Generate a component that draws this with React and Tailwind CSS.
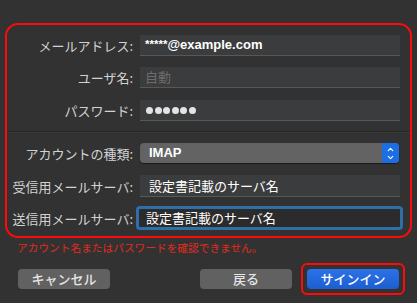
import { ChevronUp, ChevronDown } from 'lucide-react'

const jp = { fontFamily: '"Noto Sans CJK JP", "Noto Sans", sans-serif' }

const Label = ({ children }) => (
  <div className="w-[127px] shrink-0 text-right text-[13px] leading-none text-[#d2d2d2] pr-[1px]" style={jp}>
    {children}
  </div>
)

const Field = ({ children, className = '' }) => (
  <div className={`w-[260px] h-[21px] flex items-center pl-[5px] bg-[#3b3c3d] border-b border-[#575859] ${className}`}>
    {children}
  </div>
)

const Row = ({ label, children, className = '' }) => (
  <div className={`flex items-center gap-[6px] ${className}`}>
    <Label>{label}</Label>
    {children}
  </div>
)

export default function App() {
  return (
    <div className="w-[417px] h-[303px] bg-[#323232] pt-[23px] px-[5px] overflow-hidden">
      {/* 入力欄 */}
      <div className="w-[407px] h-[215px] border-2 border-[#ff0a0a] rounded-[13px] pt-[10px]">
        <Row label="メールアドレス:">
          <Field>
            <span className="text-[13px] font-semibold text-white" style={{ fontFamily: '"Liberation Sans", Arial, sans-serif' }}>
              <span className="text-[11.5px] align-[1px]">*****</span>@example.com
            </span>
          </Field>
        </Row>
        <Row label="ユーザ名:" className="mt-[11px]">
          <Field>
            <span className="text-[13px] text-[#6c6c6c]" style={jp}>自動</span>
          </Field>
        </Row>
        <Row label="パスワード:" className="mt-[12px]">
          <Field>
            <div className="flex gap-[1.5px] pl-[1px]">
              {[0, 1, 2, 3, 4, 5].map((i) => (
                <span key={i} className="w-[7px] h-[7px] rounded-full bg-[#e4e4e4]" />
              ))}
            </div>
          </Field>
        </Row>

        <div className="mt-[10px] border-t border-[#262626] border-b-[1px] border-b-[#3a3a3a]" />

        <Row label="アカウントの種類:" className="mt-[10px]">
          <div className="w-[259px] h-[20px] flex items-center rounded-[4px] bg-[#636363] shadow-[0_1px_1px_rgba(0,0,0,0.5)]">
            <span className="flex-1 pl-[9px] text-[13px] font-semibold text-white" style={{ fontFamily: '"Liberation Sans", Arial, sans-serif' }}>
              IMAP
            </span>
            <div className="w-[17px] h-[20px] rounded-r-[4px] bg-[#1b6fe3] flex flex-col items-center justify-center">
              <ChevronUp size={9} strokeWidth={3} className="text-white -mb-[1px]" />
              <ChevronDown size={9} strokeWidth={3} className="text-white" />
            </div>
          </div>
        </Row>
        <Row label="受信用メールサーバ:" className="mt-[12px]">
          <Field className="h-[22px] pl-[9px]">
            <span className="text-[13px] text-white" style={jp}>設定書記載のサーバ名</span>
          </Field>
        </Row>
        <Row label="送信用メールサーバ:" className="mt-[9px]">
          <div className="-ml-[4px] w-[267px] h-[24px] rounded-[4px] border-[3px] border-[#2f6ea8] bg-[#2b2b2b] flex items-center pl-[7px]">
            <span className="text-[13px] text-white" style={jp}>設定書記載のサーバ名</span>
          </div>
        </Row>
      </div>

      <p className="mt-[2px] pl-[12px] text-[10.7px] text-[#e22a1f]" style={jp}>
        アカウント名またはパスワードを確認できません。
      </p>

      {/* ボタン */}
      <div className="mt-[11px] flex items-center pl-[13px]">
        <button className="w-[92px] h-[20px] rounded-[4px] bg-[#616161] text-[13px] font-medium text-[#e6e6e6]" style={jp}>
          キャンセル
        </button>
        <button className="ml-[90px] w-[92px] h-[20px] rounded-[4px] bg-[#616161] text-[13px] font-medium text-[#e6e6e6]" style={jp}>
          戻る
        </button>
        <div className="ml-[9px] p-[4px] -my-[4px] border-2 border-[#ff0a0a] rounded-[6px]">
          <button className="w-[92px] h-[20px] rounded-[4px] bg-gradient-to-b from-[#2b72e6] to-[#1c5ed2] text-[13px] font-medium text-white block" style={jp}>
            サインイン
          </button>
        </div>
      </div>
    </div>
  )
}
